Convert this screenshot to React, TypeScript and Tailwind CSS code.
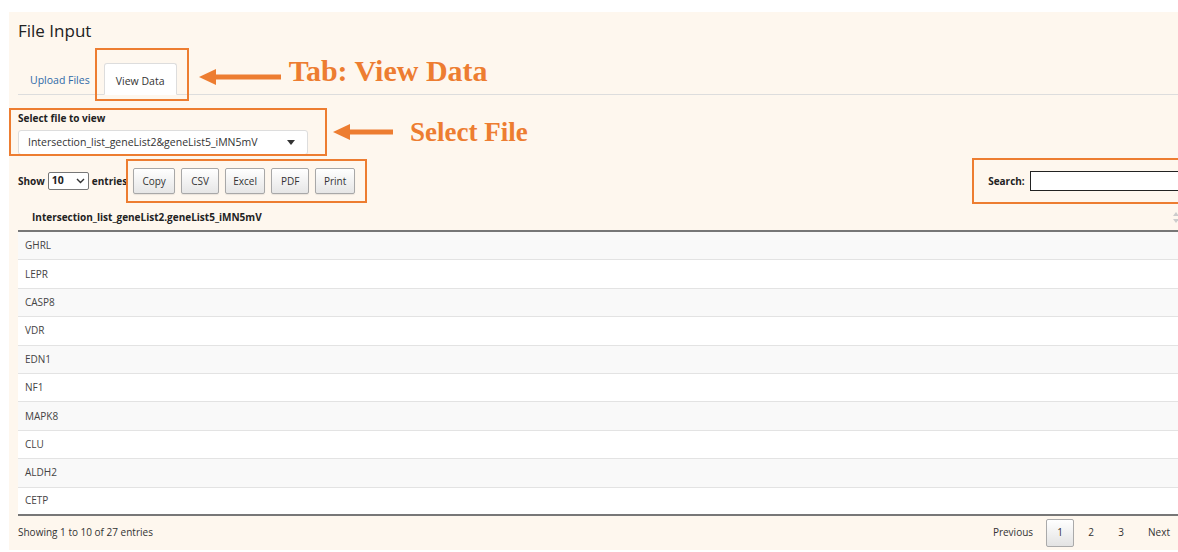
import React from "react";

const ORANGE = "#ed7d31";

function LeftArrow({ width }: { width: number }) {
  return (
    <svg width={width} height={18} viewBox={`0 0 ${width} 18`}>
      <polygon points={`0,9 17,1 17,17`} fill={ORANGE} />
      <rect x={15} y={6.5} width={width - 15} height={5} fill={ORANGE} />
    </svg>
  );
}

function ExportButton({ label, w }: { label: string; w: string }) {
  return (
    <button
      className={`${w} h-[26px] rounded-[2px] border border-[#a8a8a8] bg-gradient-to-b from-white to-[#e6e6e6] text-[10px] text-[#333] shadow-[0_1px_1px_rgba(0,0,0,0.08)]`}
    >
      {label}
    </button>
  );
}

const genes = ["GHRL", "LEPR", "CASP8", "VDR", "EDN1", "NF1", "MAPK8", "CLU", "ALDH2", "CETP"];

export default function App() {
  return (
    <div
      className="w-[1178px] h-[552px] overflow-hidden bg-white text-[#333]"
      style={{ fontFamily: '"Open Sans", "Noto Sans", sans-serif' }}
    >
      <div className="ml-[9px] mt-[12px] w-[1220px] h-[538px] bg-[#fef7ee] pl-[9px] pt-[8px]">
        {/* panel title */}
        <div className="h-[22px] text-[17px] leading-[22px] text-[#222]">File Input</div>

        {/* tab strip */}
        <div className="mt-[21px] flex items-end h-[32px] border-b border-[#ddd] w-[1200px]">
          <div className="h-[30px] px-[12px] pt-[4px] flex items-center text-[10.5px] text-[#2f6aa8]">Upload Files</div>
          <div className="relative ml-[2px] h-[32px] w-[73px] -mb-px flex items-center justify-center rounded-t-[3px] border border-[#ddd] border-b-white bg-white pt-[5px] text-[10.5px] text-[#333]">
            View Data
            <div className="absolute left-[-10px] top-[-16px] w-[94px] h-[53px] border-[2.5px] border-[#ed7d31]" />
          </div>
          <div className="ml-[22px] self-center mt-[-4px] flex items-center">
            <LeftArrow width={82} />
            <span
              className="ml-[8px] mt-[-12px] text-[30px] font-bold leading-none text-[#ed7d31]"
              style={{ fontFamily: '"Liberation Serif", "Times New Roman", serif' }}
            >
              Tab: View Data
            </span>
          </div>
        </div>

        {/* file selector */}
        <div className="mt-[13px] flex items-center">
          <div className="relative w-[318px] h-[48px] ml-[-9px] pl-[9px] pt-[4px]">
            <div className="absolute inset-0 border-[2.5px] border-[#ed7d31]" />
            <div className="text-[10px] font-bold leading-[12px] text-[#222]">Select file to view</div>
            <div className="mt-[6px] w-[290px] h-[25px] flex items-center justify-between rounded-[3px] border border-[#ddd] bg-white pl-[9px] pr-[12px] text-[10.5px] text-[#333]">
              <span>Intersection_list_geneList2&amp;geneList5_iMN5mV</span>
              <svg width="8" height="5" viewBox="0 0 8 5">
                <polygon points="0,0 8,0 4,5" fill="#333" />
              </svg>
            </div>
          </div>
          <div className="ml-[6px] flex items-center">
            <LeftArrow width={60} />
            <span
              className="ml-[17px] text-[27px] font-bold leading-none text-[#ed7d31]"
              style={{ fontFamily: '"Liberation Serif", "Times New Roman", serif' }}
            >
              Select File
            </span>
          </div>
        </div>

        {/* length / buttons / search row */}
        <div className="mt-[2px] h-[46px] flex items-center w-[1200px]">
          <div className="flex items-center text-[10px] font-bold text-[#222]">
            <span>Show</span>
            <div className="mx-[3px] w-[41px] h-[18px] flex items-center justify-between border border-[#777] rounded-[2px] bg-white px-[3px] text-[10.5px] font-bold">
              <span>10</span>
              <svg width="9" height="6" viewBox="0 0 9 6">
                <polyline points="1,1 4.5,4.5 8,1" fill="none" stroke="#333" strokeWidth="1.4" />
              </svg>
            </div>
            <span>entries</span>
          </div>
          <div className="relative ml-[-1px] h-[44px] w-[241px] flex items-center gap-[6px] pl-[7px]">
            <div className="absolute inset-0 border-[2.5px] border-[#ed7d31]" />
            <ExportButton label="Copy" w="w-[42px]" />
            <ExportButton label="CSV" w="w-[38px]" />
            <ExportButton label="Excel" w="w-[40px]" />
            <ExportButton label="PDF" w="w-[38px]" />
            <ExportButton label="Print" w="w-[40px]" />
          </div>
          <div className="relative ml-[605px] h-[46px] w-[230px] flex items-center pl-[16px]">
            <div className="absolute inset-0 border-[2.5px] border-[#ed7d31]" />
            <span className="text-[10px] font-bold text-[#222]">Search:</span>
            <div className="ml-[5px] w-[190px] h-[20px] border-[1.5px] border-[#222] bg-white" />
          </div>
        </div>

        {/* data table */}
        <div className="w-[1190px]">
          <div className="h-[28px] flex items-center justify-between border-b-2 border-[#777] pl-[14px] pr-[29px] text-[10px] font-bold text-[#222]">
            <span>Intersection_list_geneList2.geneList5_iMN5mV</span>
            <svg width="6" height="11" viewBox="0 0 6 11">
              <polygon points="3,0 6,4 0,4" fill="#ccc" />
              <polygon points="0,7 6,7 3,11" fill="#ccc" />
            </svg>
          </div>
          {genes.map((g, i) => (
            <div
              key={g}
              className={`h-[28.4px] flex items-center pl-[7px] text-[10px] text-[#444] ${
                i % 2 === 0 ? "bg-[#f9f9f9]" : "bg-white"
              } ${i < genes.length - 1 ? "border-b border-[#e3e3e3]" : "border-b-2 border-[#777]"}`}
            >
              {g}
            </div>
          ))}
        </div>

        {/* footer */}
        <div className="w-[1152px] mt-[1px] h-[32px] flex items-center justify-between text-[10px] text-[#333]">
          <span>Showing 1 to 10 of 27 entries</span>
          <div className="flex items-center">
            <span className="mr-[13px]">Previous</span>
            <span className="w-[28px] h-[28px] flex items-center justify-center rounded-[2px] border border-[#aaa] bg-gradient-to-b from-white to-[#e3e3e3]">1</span>
            <span className="ml-[2px] w-[30px] text-center">2</span>
            <span className="w-[30px] text-center">3</span>
            <span className="ml-[12px]">Next</span>
          </div>
        </div>
      </div>
    </div>
  );
}
